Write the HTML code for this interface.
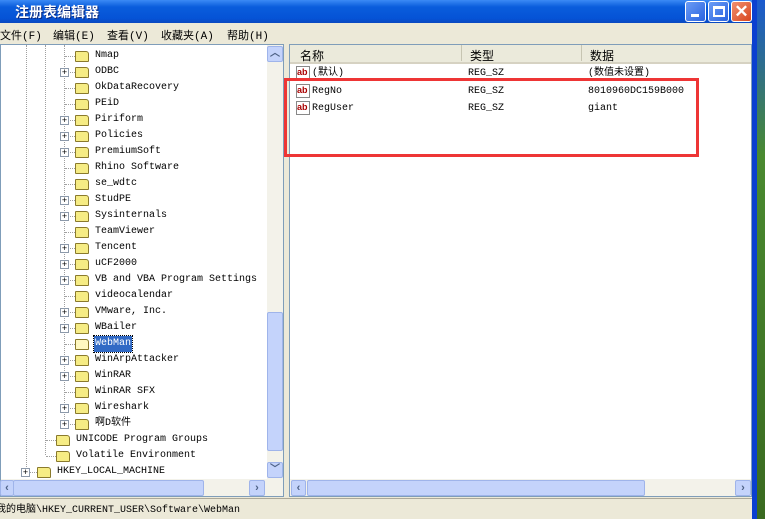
<!DOCTYPE html>
<html><head><meta charset="utf-8"><style>
*{margin:0;padding:0;box-sizing:border-box}
body{width:765px;height:519px;overflow:hidden;position:relative;background:#ece9d8;font-family:"Liberation Mono","Noto Sans CJK SC",monospace;font-size:10px;color:#000}
.a{position:absolute}
.title{left:0;top:0;width:757px;height:23px;background:linear-gradient(#3b8af5,#0a5ddc 30%,#0553d6 80%,#0a48c0);}
.title span{position:absolute;left:15px;top:2px;color:#fff;font:bold 14px "Liberation Sans","Noto Sans CJK SC",sans-serif;text-shadow:1px 1px #0a2a80}
.btn{top:1px;width:21px;height:21px;border:1px solid #fff;border-radius:3px;background:linear-gradient(135deg,#6b9cf5,#2a63e0)}
.menu{left:0;top:23px;height:21px;width:752px;font-family:"Liberation Mono","Noto Sans CJK SC",monospace;font-size:11px}
.menu span{position:absolute;top:4px}
.pane{background:#fff;border:1px solid #7f9db9}
.row{position:absolute;height:16px;line-height:16px;white-space:pre}
.fold{position:absolute;width:14px;height:11px;background:#f6ec84;border:1px solid #8a7a2c;border-radius:1px 3px 1px 1px}
.plus{position:absolute;width:9px;height:9px;border:1px solid #8c99aa;background:#fff;font:9px/7px "Liberation Sans";text-align:center;color:#000}
.sb{background:#c4d3fb;border:1px solid #9fb4ea;border-radius:2px}
.vd{position:absolute;border-left:1px dotted #a0a0a0}
.hd{position:absolute;border-top:1px dotted #a0a0a0;height:0}
.ab{position:absolute;width:14px;height:14px;border:1px solid #888;background:#fff;color:#a00;font:bold 9px/11px "Liberation Sans";text-align:left}
</style></head><body>
<div class="a title"><span>注册表编辑器</span>
<div class="a btn" style="left:685px"><div class="a" style="left:5px;top:12px;width:8px;height:3px;background:#fff"></div></div>
<div class="a btn" style="left:708px"><div class="a" style="left:4px;top:4px;width:12px;height:11px;border:2px solid #fff;border-top-width:3px"></div></div>
<div class="a btn" style="left:731px;background:linear-gradient(135deg,#f09070,#d8461f);color:#fff;font:bold 17px/19px 'Liberation Sans';text-align:center">✕</div>
</div>
<div class="a" style="left:752px;top:0;width:5px;height:519px;background:#0a3fd0"></div>
<div class="a" style="left:757px;top:0;width:8px;height:519px;background:linear-gradient(#1a5ad0,#4a8a30 30%,#3a6a20)"></div>
<div class="a menu"><span style="left:0">文件(F)</span><span style="left:53px">编辑(E)</span><span style="left:107px">查看(V)</span><span style="left:161px">收藏夹(A)</span><span style="left:227px">帮助(H)</span></div>

<div class="a pane" style="left:0;top:44px;width:284px;height:453px"></div>
<div class="vd" style="left:26px;top:45px;height:426px"></div>
<div class="vd" style="left:45px;top:45px;height:410px"></div>
<div class="vd" style="left:64px;top:45px;height:378px"></div>

<div id="tree"></div>
<script>
var items=["Nmap",0,"ODBC",1,"OkDataRecovery",0,"PEiD",0,"Piriform",1,"Policies",1,"PremiumSoft",1,"Rhino Software",0,"se_wdtc",0,"StudPE",1,"Sysinternals",1,"TeamViewer",0,"Tencent",1,"uCF2000",1,"VB and VBA Program Settings",1,"videocalendar",0,"VMware, Inc.",1,"WBailer",1,"WebMan",2,"WinArpAttacker",1,"WinRAR",1,"WinRAR SFX",0,"Wireshark",1,"啊D软件",1];
var h="";
for(var i=0;i<items.length;i+=2){var y=48+(i/2)*16,n=items[i],p=items[i+1];
h+='<div class="hd" style="left:65px;top:'+(y+8)+'px;width:10px"></div>';
if(p==1)h+='<div class="plus" style="left:60px;top:'+(y+4)+'px">+</div>';
h+='<div class="fold" style="left:75px;top:'+(y+3)+'px'+(p==2?';background:#fff8c0':'')+'"></div>';
if(p==2)h+='<div class="row" style="left:94px;top:'+(y)+'px;background:#316ac5;color:#fff;outline:1px dotted #000;padding:0 1px">'+n+'</div>';
else h+='<div class="row" style="left:95px;top:'+y+'px">'+n+'</div>';}
h+='<div class="hd" style="left:46px;top:440px;width:10px"></div><div class="fold" style="left:56px;top:435px"></div><div class="row" style="left:76px;top:432px">UNICODE Program Groups</div>';
h+='<div class="hd" style="left:46px;top:456px;width:10px"></div><div class="fold" style="left:56px;top:451px"></div><div class="row" style="left:76px;top:448px">Volatile Environment</div>';
h+='<div class="hd" style="left:27px;top:472px;width:10px"></div><div class="plus" style="left:21px;top:468px">+</div><div class="fold" style="left:37px;top:467px"></div><div class="row" style="left:57px;top:464px">HKEY_LOCAL_MACHINE</div>';
document.getElementById('tree').innerHTML=h;
</script>

<div class="a" style="left:267px;top:45px;width:16px;height:434px;background:#f3f2ea"></div>
<div class="a sb" style="left:267px;top:46px;width:16px;height:16px;color:#4d6185;font:bold 10px/14px 'Liberation Sans';text-align:center">︿</div>
<div class="a sb" style="left:267px;top:312px;width:16px;height:139px"></div>
<div class="a sb" style="left:267px;top:462px;width:16px;height:16px;color:#4d6185;font:bold 10px/14px 'Liberation Sans';text-align:center">﹀</div>
<div class="a" style="left:1px;top:479px;width:282px;height:17px;background:#f3f2ea"></div>
<div class="a sb" style="left:0;top:480px;width:14px;height:16px;color:#4d6185;font:bold 11px/14px 'Liberation Sans';text-align:center">‹</div>
<div class="a sb" style="left:13px;top:480px;width:191px;height:16px"></div>
<div class="a sb" style="left:249px;top:480px;width:16px;height:16px;color:#4d6185;font:bold 11px/14px 'Liberation Sans';text-align:center">›</div>

<div class="a pane" style="left:289px;top:44px;width:463px;height:453px"></div>
<div class="a" style="left:290px;top:45px;width:461px;height:19px;background:#ebeadb;border-bottom:2px solid #d6d2c2;font-family:'Liberation Sans','Noto Sans CJK SC',sans-serif;font-size:12px">
<span class="a" style="left:10px;top:2px">名称</span><span class="a" style="left:171px;top:0;width:1px;height:16px;background:#c7c5b2"></span>
<span class="a" style="left:180px;top:2px">类型</span><span class="a" style="left:291px;top:0;width:1px;height:16px;background:#c7c5b2"></span>
<span class="a" style="left:300px;top:2px">数据</span></div>
<div class="ab" style="left:296px;top:66px">ab</div><div class="row" style="left:312px;top:66px">(默认)</div><div class="row" style="left:468px;top:66px">REG_SZ</div><div class="row" style="left:588px;top:66px">(数值未设置)</div>
<div class="ab" style="left:296px;top:84px">ab</div><div class="row" style="left:312px;top:84px">RegNo</div><div class="row" style="left:468px;top:84px">REG_SZ</div><div class="row" style="left:588px;top:84px">8010960DC159B000</div>
<div class="ab" style="left:296px;top:101px">ab</div><div class="row" style="left:312px;top:101px">RegUser</div><div class="row" style="left:468px;top:101px">REG_SZ</div><div class="row" style="left:588px;top:101px">giant</div>
<div class="a" style="left:284px;top:78px;width:415px;height:79px;border:3px solid #ee3535"></div>
<div class="a" style="left:290px;top:479px;width:461px;height:17px;background:#f3f2ea"></div>
<div class="a sb" style="left:291px;top:480px;width:15px;height:16px;color:#4d6185;font:bold 11px/14px 'Liberation Sans';text-align:center">‹</div>
<div class="a sb" style="left:307px;top:480px;width:338px;height:16px"></div>
<div class="a sb" style="left:735px;top:480px;width:16px;height:16px;color:#4d6185;font:bold 11px/14px 'Liberation Sans';text-align:center">›</div>

<div class="a" style="left:0;top:498px;width:752px;height:1px;background:#aca899"></div>
<div class="a row" style="left:-4px;top:503px">我的电脑\HKEY_CURRENT_USER\Software\WebMan</div>
</body></html>
